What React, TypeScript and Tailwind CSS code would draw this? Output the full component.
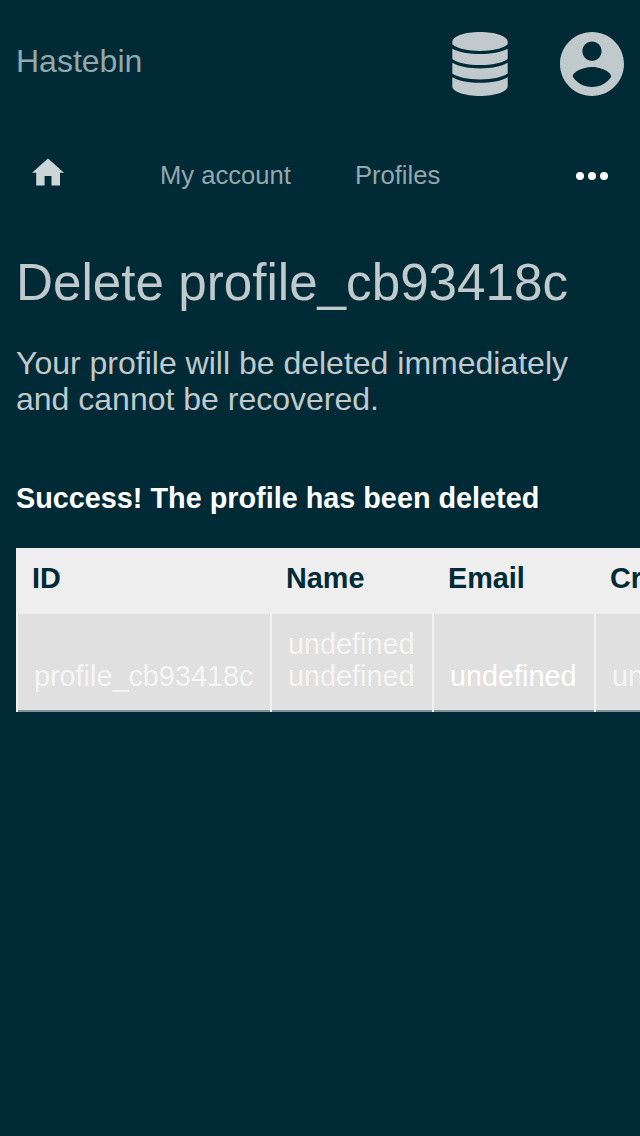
import React from "react";

export default function App() {
  return (
    <div className="h-[1136px] w-[640px] overflow-hidden bg-[#002b36] font-['Liberation_Sans',sans-serif] text-[#c0c9cb]">
      <header className="flex h-32 items-center justify-between px-4">
        <span className="pb-1.5 text-[32px] leading-9 text-[#93a8ad]">Hastebin</span>
        <div className="flex items-center gap-[52px]">
          <svg viewBox="0 0 56 64" className="h-16 w-14" fill="currentColor">
            <path d="M0.3 10C0.3 4 13 0 28 0S55.7 4 55.7 10V12.3C50 17 40 18.9 28 18.9S6 17 0.3 12.3Z" />
            <path d="M0.3 16.7C13 23.7 43 23.7 55.7 16.7V27C50 31 40 33 28 33S6 31 0.3 27Z" />
            <path d="M0.3 30.8C13 38.4 43 38.4 55.7 30.8V41.5C50 45.5 40 47.4 28 47.4S6 45.5 0.3 41.5Z" />
            <path d="M0.3 45.2C13 52.7 43 52.7 55.7 45.2V54.5C55.7 59.5 43 64 28 64S0.3 59.5 0.3 54.5Z" />
          </svg>
          <svg viewBox="2 2 20 20" className="size-16" fill="currentColor">
            <path d="M12 2C6.48 2 2 6.48 2 12s4.48 10 10 10 10-4.48 10-10S17.52 2 12 2zm0 3c1.66 0 3 1.34 3 3s-1.34 3-3 3-3-1.34-3-3 1.34-3 3-3zm0 14.2c-2.5 0-4.71-1.28-6-3.22.03-1.99 4-3.08 6-3.08 1.99 0 5.97 1.09 6 3.08-1.29 1.94-3.5 3.22-6 3.22z" />
          </svg>
        </div>
      </header>
      <nav className="flex h-24 items-center px-8 text-[25.6px] text-[#93a8ad]">
        <svg viewBox="0 0 32 28" className="mb-2 h-7 w-8 fill-[#cdd5d7]">
          <path d="M16 .4L32 14.8H28V27.6H19.5V18H12.6V27.6H4.2V14.8H0Z" />
        </svg>
        <span className="ml-24 pb-0.5">My account</span>
        <span className="ml-16 pb-0.5">Profiles</span>
        <svg viewBox="0 0 32 8" className="ml-auto h-2 w-8 fill-white">
          <circle cx="4" cy="4" r="4" /><circle cx="16" cy="4" r="4" /><circle cx="28" cy="4" r="4" />
        </svg>
      </nav>
      <main className="pl-4">
        <h1 className="pt-[29px] text-[51.2px] leading-[60px]">Delete profile_cb93418c</h1>
        <p className="pt-8 text-[32px] leading-9">Your profile will be deleted immediately<br />and cannot be recovered.</p>
        <p className="pt-[65px] text-[28.8px] leading-8 font-bold text-white">Success! The profile has been deleted</p>
        <div className="mt-[34px] w-[740px] text-[28.8px] leading-8">
          <div className="flex h-16 items-center bg-[#eee] pb-1 font-bold text-[#002b36]">
            <span className="w-[254px] pl-4">ID</span>
            <span className="w-[162px] pl-4">Name</span>
            <span className="w-[162px] pl-4">Email</span>
            <span className="w-[162px] pl-4">Created</span>
          </div>
          <div className="flex h-[100px] bg-[linear-gradient(to_bottom,#eee_2px,#e0e0e0_2px,#e0e0e0_98px,#7f959b_98px)] text-[#f5f5f5]">
            <span className="flex w-[254px] items-end border-l-2 border-[#f1f1f1] pb-5 pl-4">profile_cb93418c</span>
            <span className="flex w-[162px] items-end border-l-2 border-[#f1f1f1] pb-5 pl-4">undefined<br />undefined</span>
            <span className="flex w-[162px] items-end border-l-2 border-[#f1f1f1] pb-5 pl-4 text-white">undefined</span>
            <span className="flex w-[162px] items-end border-l-2 border-[#f1f1f1] pb-5 pl-4">undefined</span>
          </div>
        </div>
      </main>
    </div>
  );
}
